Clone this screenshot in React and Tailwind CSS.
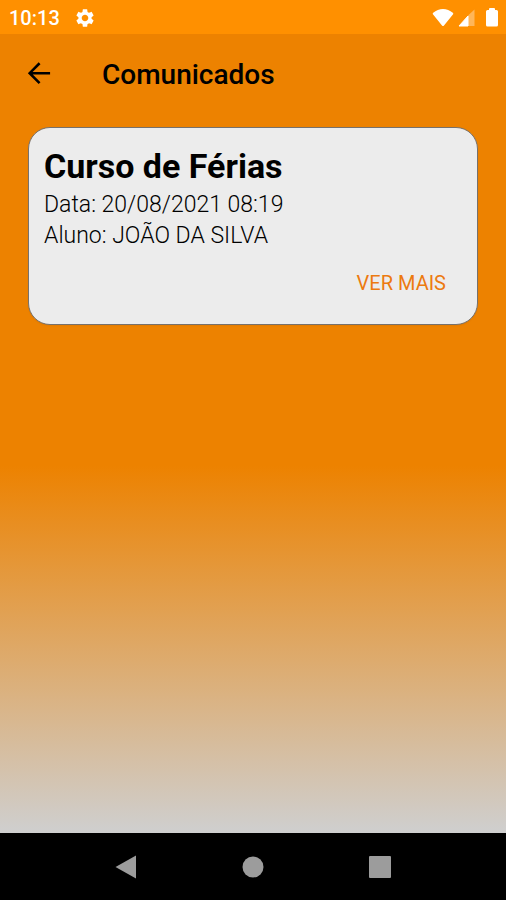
const notices = [
  { id: 1, title: 'Curso de Férias', date: '20/08/2021 08:19', student: 'JOÃO DA SILVA' },
];

const StatusBar = () => (
  <div className="flex h-[34px] items-center justify-between bg-[#ff9000] pt-px pr-2 pl-[9px] text-white">
    <div className="flex items-center gap-[14px]">
      <span className="text-[20px] leading-6 font-medium">10:13</span>
      <svg className="size-[22px]" viewBox="0 0 24 24" fill="currentColor" aria-hidden="true">
        <path d="M19.14 12.94c.04-.3.06-.61.06-.94 0-.32-.02-.64-.07-.94l2.03-1.58c.18-.14.23-.41.12-.61l-1.92-3.32c-.12-.22-.37-.29-.59-.22l-2.39.96c-.5-.38-1.03-.7-1.62-.94l-.36-2.54c-.04-.24-.24-.41-.48-.41h-3.84c-.24 0-.43.17-.47.41l-.36 2.54c-.59.24-1.13.57-1.62.94l-2.39-.96c-.22-.08-.47 0-.59.22L2.74 8.87c-.12.21-.08.47.12.61l2.03 1.58c-.05.3-.09.63-.09.94s.02.64.07.94l-2.03 1.58c-.18.14-.23.41-.12.61l1.92 3.32c.12.22.37.29.59.22l2.39-.96c.5.38 1.03.7 1.62.94l.36 2.54c.05.24.24.41.48.41h3.84c.24 0 .44-.17.47-.41l.36-2.54c.59-.24 1.13-.56 1.62-.94l2.39.96c.22.08.47 0 .59-.22l1.92-3.32c.12-.22.07-.47-.12-.61l-2.01-1.58zM12 15.6c-1.98 0-3.6-1.62-3.6-3.6s1.62-3.6 3.6-3.6 3.6 1.62 3.6 3.6-1.62 3.6-3.6 3.6z" />
      </svg>
    </div>
    <div className="flex items-center gap-[3px]">
      {/* Wi-Fi */}
      <svg className="h-[18px] w-[22px]" viewBox="0 0 22 18" fill="currentColor" aria-hidden="true">
        <path d="M12 16.400Q11 17.400 10 16.400L0.900 5.200Q0.300 4.300 1.200 3.700C4 1.400 7.500 0 11 0s7 1.400 9.800 3.700Q21.700 4.300 21.100 5.200Z" />
      </svg>
      {/* Mobile signal */}
      <svg className="h-[18px] w-[18px]" viewBox="0 0 18 18" fill="currentColor" aria-hidden="true">
        <path d="M11 6.600 17.500 0.500V17H11Z" opacity="0.35" />
        <path d="M2 17 11 7V17Z" stroke="currentColor" strokeLinejoin="round" />
      </svg>
      {/* Battery */}
      <svg className="ml-2 h-5 w-3" viewBox="0 0 12 20" fill="currentColor" aria-hidden="true">
        <path d="M4 0h4a1 1 0 0 1 1 1v1h1.500A1.500 1.500 0 0 1 12 3.500v13.500A1.500 1.500 0 0 1 10.500 18.500h-9A1.500 1.500 0 0 1 0 17V3.500A1.500 1.500 0 0 1 1.500 2H3V1a1 1 0 0 1 1-1Z" />
      </svg>
    </div>
  </div>
);

const Header = () => (
  <header className="flex h-20 items-center pl-[23px]">
    <button type="button" aria-label="Voltar" className="p-0.5">
      <svg className="size-[28px]" viewBox="0 0 24 24" fill="none" stroke="currentColor" strokeWidth="2.2" aria-hidden="true">
        <path d="M21.500 11.300H4M12.500 2.800 4 11.300l8.500 8.500" />
      </svg>
    </button>
    <h1 className="ml-[47px] pt-0.5 text-[28px] leading-8 font-medium">Comunicados</h1>
  </header>
);

const NoticeCard = ({ notice }) => (
  <article className="flex flex-col rounded-[22px] border border-[#77716b] bg-[#ececec] px-[15px] pt-[18px] pb-[23px] shadow-xs">
    <h2 className="pb-[3px] text-[34px] leading-10 font-bold">{notice.title}</h2>
    <p className="text-[23px] leading-[31px] font-light">Data: {notice.date}</p>
    <p className="text-[23px] leading-[31px] font-light">Aluno: {notice.student}</p>
    <button type="button" className="mt-[14px] mr-4 self-end py-1 text-[20px] leading-7 text-[#ec7a10]">
      VER MAIS
    </button>
  </article>
);

const NavigationBar = () => (
  <nav className="flex h-[67px] items-center justify-around bg-black px-[62px] text-[#9c9c9c]">
    <button type="button" aria-label="Voltar">
      <svg className="size-6" viewBox="0 0 24 24" fill="currentColor" aria-hidden="true">
        <path d="M22 0.500V23.500L1.500 12Z" />
      </svg>
    </button>
    <button type="button" aria-label="Início">
      <svg className="size-6" viewBox="0 0 24 24" fill="currentColor" aria-hidden="true">
        <circle cx="12" cy="12" r="10.500" />
      </svg>
    </button>
    <button type="button" aria-label="Recentes">
      <svg className="size-6" viewBox="0 0 24 24" fill="currentColor" aria-hidden="true">
        <rect x="1" y="1" width="22" height="22" rx="1" />
      </svg>
    </button>
  </nav>
);

const App = () => (
  <div className="flex min-h-screen flex-col font-['Roboto',sans-serif] text-black">
    <StatusBar />
    <div className="flex flex-1 flex-col bg-[linear-gradient(to_bottom,#ed8200_54%,#cfcfcf)]">
      <Header />
      <main className="flex flex-col gap-4 px-7 pt-[13px]">
        {notices.map((notice) => (
          <NoticeCard key={notice.id} notice={notice} />
        ))}
      </main>
    </div>
    <NavigationBar />
  </div>
);

export default App;
